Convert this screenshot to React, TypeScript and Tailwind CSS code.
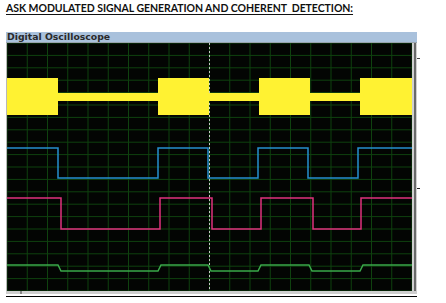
import React from "react";

const W = 405;
const H = 248;

function Scope() {
  const cols = Array.from({ length: 21 }, (_, i) => i * (W / 20));
  const rows = Array.from({ length: 21 }, (_, i) => i * (H / 20));
  const blocks = [
    [0, 51],
    [151, 202],
    [252, 303],
    [353, 405],
  ];
  return (
    <svg width={W} height={H} viewBox={`0 0 ${W} ${H}`} className="block">
      <rect x={0} y={0} width={W} height={H} fill="#030503" />
      {cols.map((x, i) => (
        <line key={"c" + i} x1={x} y1={0} x2={x} y2={H} stroke="#0f420f" strokeWidth={1} />
      ))}
      {rows.map((y, i) => (
        <line key={"r" + i} x1={0} y1={y} x2={W} y2={y} stroke="#0f420f" strokeWidth={1} />
      ))}
      <line x1={202.5} y1={0} x2={202.5} y2={H} stroke="#c8c8c8" strokeWidth={1} strokeDasharray="2 2" />
      {/* ASK signal */}
      <rect x={0} y={50} width={W} height={8} fill="#fff232" />
      {blocks.map(([a, b], i) => (
        <rect key={"b" + i} x={a} y={35} width={b - a} height={37} fill="#fff232" />
      ))}
      {/* carrier / blue */}
      <path
        d="M0 105 H51 V135 H151 V105 H201 V135 H251 V105 H301 V135 H351 V105 H405"
        fill="none"
        stroke="#2690d0"
        strokeWidth={1.5}
      />
      {/* magenta */}
      <path
        d="M0 155 H54 V186 H153 V155 H205 V186 H254 V155 H306 V186 H354 V155 H405"
        fill="none"
        stroke="#e0327e"
        strokeWidth={1.5}
      />
      {/* green */}
      <path
        d="M0 222 H51 L54 228 H151 L154 222 H201 L204 228 H251 L254 222 H302 L305 228 H353 L356 222 H405"
        fill="none"
        stroke="#3aa84a"
        strokeWidth={1.5}
      />
    </svg>
  );
}

export default function App() {
  return (
    <div className="w-[446px] h-[303px] bg-white overflow-hidden relative">
      <div
        className="pl-[6px] pt-[2px] h-[30px] text-[10.5px] leading-[13px] font-bold text-[#111]"
        style={{ fontFamily: "Lato, 'Open Sans', sans-serif" }}
      >
        <span className="underline underline-offset-[2px] tracking-[-0.05px]">
          ASK MODULATED SIGNAL GENERATION AND COHERENT&nbsp; DETECTION:
        </span>
      </div>
      <div className="ml-[6px] mt-[2px] w-[411px] relative">
        <div
          className="h-[10px] bg-[#a9c1dc] flex items-center pl-[1px] text-[9.3px] font-bold text-[#2a2a2a] leading-[10px]"
          style={{ fontFamily: "'DejaVu Sans', Verdana, sans-serif" }}
        >
          Digital Oscilloscope
        </div>
        <div className="h-[1px] bg-[#9aa4ae]" />
        <div className="flex">
          <div className="w-[1px] bg-[#b8b8b8]" />
          <Scope />
          <div className="w-[5px] flex bg-[#d0d0d0]">
            <div className="w-[2px]" />
            <div className="w-[2px] bg-[#6a6a6a]" />
          </div>
        </div>
        <div className="h-[3px] bg-[#cfcfcf] flex">
          <div className="ml-[14px] w-[2px] bg-[#888]" />
        </div>
        <div className="mt-[2px] h-[1px] bg-black" />
        <div className="absolute right-[-3px] top-[26px] w-[3px] h-[1px] bg-[#444]" />
        <div className="absolute right-[-3px] top-[156px] w-[3px] h-[1px] bg-[#222]" />
      </div>
    </div>
  );
}
